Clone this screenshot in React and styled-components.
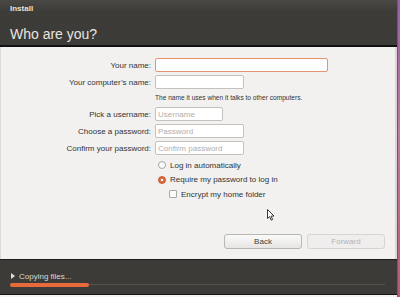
import React from "react";
import styled, { createGlobalStyle } from "styled-components";

const Global = createGlobalStyle`
  html, body { margin: 0; padding: 0; background: #f4f4f4; }
  body { font-family: "Liberation Sans", "DejaVu Sans", sans-serif; }
  * { box-sizing: border-box; }
`;

const Screen = styled.div`
  position: relative;
  width: 400px;
  height: 297px;
  display: flex;
  overflow: hidden;
`;

const Window = styled.div`
  flex: 1;
  display: flex;
  flex-direction: column;
  background: #f7f7f7;
`;

const DesktopEdge = styled.div`
  width: 3px;
  background: linear-gradient(to bottom, #9b5fae 0%, #c17a9a 45%, #b65a78 100%);
  border-left: 1px solid #6b5a68;
`;

const Header = styled.header`
  height: 47px;
  background: linear-gradient(to bottom, #4a4945 0px, #3d3c38 11px, #3c3b37 100%);
  color: #dfdbd2;
  padding: 4px 0 0 10px;
  display: flex;
  flex-direction: column;
  border-bottom: 2px solid #111;
`;

const WindowTitle = styled.div`
  font-size: 8px;
  font-weight: bold;
  line-height: 9px;
  color: #e6e3dd;
`;

const PageTitle = styled.h1`
  margin: 13px 0 0 0;
  font-size: 14px;
  font-weight: normal;
  line-height: 16px;
  color: #e8e5e0;
`;

const Content = styled.main`
  flex: 1;
  position: relative;
  background: #f2f1f0;
  border-left: 1px solid #dcdbd9;
  border-right: 2px solid #d8d7d5;
  display: flex;
  flex-direction: column;
  padding: 11px 10px 10px 0;
`;

const Form = styled.div`
  display: grid;
  grid-template-columns: 150px 1fr;
  column-gap: 4px;
  row-gap: 3px;
  align-items: center;
`;

const Label = styled.label`
  font-size: 8px;
  color: #333;
  text-align: right;
  white-space: nowrap;
`;

const Input = styled.input`
  width: ${(p) => p.$w}px;
  height: 14px;
  padding: 0 2px;
  font-family: inherit;
  font-size: 8px;
  color: #333;
  background: #fff;
  border: 1px solid ${(p) => (p.$focus ? "#e59470" : "#c4c2bf")};
  border-radius: 2px;
  outline: none;
  &::placeholder { color: #b0aeab; }
`;

const Hint = styled.div`
  grid-column: 2;
  font-size: 6.6px;
  color: #333;
  height: 13px;
  line-height: 13px;
  margin-top: -1px;
`;

const Options = styled.div`
  margin: 6px 0 0 155px;
  display: flex;
  flex-direction: column;
  gap: 6.5px;
`;

const Option = styled.div`
  display: flex;
  align-items: center;
  gap: 4px;
  font-size: 8px;
  color: #333;
  height: 8px;
  padding-left: ${(p) => (p.$indent ? 13 : 2)}px;
`;

const Radio = styled.span`
  width: 8px;
  height: 8px;
  border-radius: 50%;
  border: 1px solid ${(p) => (p.$checked ? "#c9532a" : "#a9a7a4")};
  background: ${(p) =>
    p.$checked ? "radial-gradient(circle, #fff 0 1.2px, #e0693d 1.6px)" : "#fbfbfb"};
  flex: none;
`;

const Check = styled.span`
  width: 8px;
  height: 8px;
  border-radius: 1px;
  border: 1px solid #a9a7a4;
  background: #fbfbfb;
  flex: none;
`;

const Buttons = styled.div`
  margin-top: auto;
  display: flex;
  justify-content: flex-end;
  gap: 5px;
`;

const Button = styled.button`
  width: 78px;
  height: 15px;
  font-family: inherit;
  font-size: 8px;
  color: ${(p) => (p.disabled ? "#b5b3b0" : "#3c3c3c")};
  background: ${(p) =>
    p.disabled ? "#efeeed" : "linear-gradient(to bottom, #fafaf9, #e6e5e3)"};
  border: 1px solid ${(p) => (p.disabled ? "#d6d5d3" : "#b9b7b4")};
  border-radius: 3px;
  padding: 0;
`;

const Cursor = styled.svg`
  position: absolute;
  left: 266px;
  top: 162px;
`;

const Footer = styled.footer`
  height: 36px;
  background: #3c3b37;
  border-top: 1px solid #1c1c1a;
  border-bottom: 1px solid #151514;
  padding: 11px 12px 0 10px;
  display: flex;
  flex-direction: column;
`;

const Status = styled.div`
  display: flex;
  align-items: center;
  gap: 4px;
  font-size: 8px;
  color: #dcd9d3;
  padding-left: 1px;
  height: 10px;
`;

const Arrow = styled.span`
  width: 0;
  height: 0;
  border-top: 3px solid transparent;
  border-bottom: 3px solid transparent;
  border-left: 4px solid #e0ddd8;
`;

const Track = styled.div`
  margin-top: 2px;
  height: 4px;
  position: relative;
  display: flex;
  align-items: center;
  &::before {
    content: "";
    position: absolute;
    left: 0;
    right: 0;
    top: 1px;
    height: 1px;
    background: #55534f;
  }
`;

const Fill = styled.div`
  position: relative;
  height: 4px;
  border-radius: 2px;
  background: #e8693a;
`;

const BottomStrip = styled.div`
  height: 2px;
  background: #f4f4f4;
`;

export default function App() {
  return (
    <Screen>
      <Global />
      <Window>
        <Header>
          <WindowTitle>Install</WindowTitle>
          <PageTitle>Who are you?</PageTitle>
        </Header>
        <Content>
          <Form>
            <Label>Your name:</Label>
            <Input $w={173} $focus />
            <Label>Your computer’s name:</Label>
            <Input $w={89} />
            <Hint>The name it uses when it talks to other computers.</Hint>
            <Label>Pick a username:</Label>
            <Input $w={68} placeholder="Username" />
            <Label>Choose a password:</Label>
            <Input $w={89} placeholder="Password" />
            <Label>Confirm your password:</Label>
            <Input $w={89} placeholder="Confirm password" />
          </Form>
          <Options>
            <Option>
              <Radio />
              Log in automatically
            </Option>
            <Option>
              <Radio $checked />
              Require my password to log in
            </Option>
            <Option $indent>
              <Check />
              Encrypt my home folder
            </Option>
          </Options>
          <Buttons>
            <Button>Back</Button>
            <Button disabled>Forward</Button>
          </Buttons>
          <Cursor width="8" height="12" viewBox="0 0 8 12">
            <path d="M0.5 0.5 L0.5 9.5 L2.6 7.6 L4.2 11.2 L5.6 10.6 L4.1 7.1 L7 7 Z" fill="#fff" stroke="#222" strokeWidth="0.9" strokeLinejoin="round" />
          </Cursor>
        </Content>
        <Footer>
          <Status>
            <Arrow />
            Copying files...
          </Status>
          <Track>
            <Fill style={{ width: "21%" }} />
          </Track>
        </Footer>
        <BottomStrip />
      </Window>
      <DesktopEdge />
    </Screen>
  );
}
